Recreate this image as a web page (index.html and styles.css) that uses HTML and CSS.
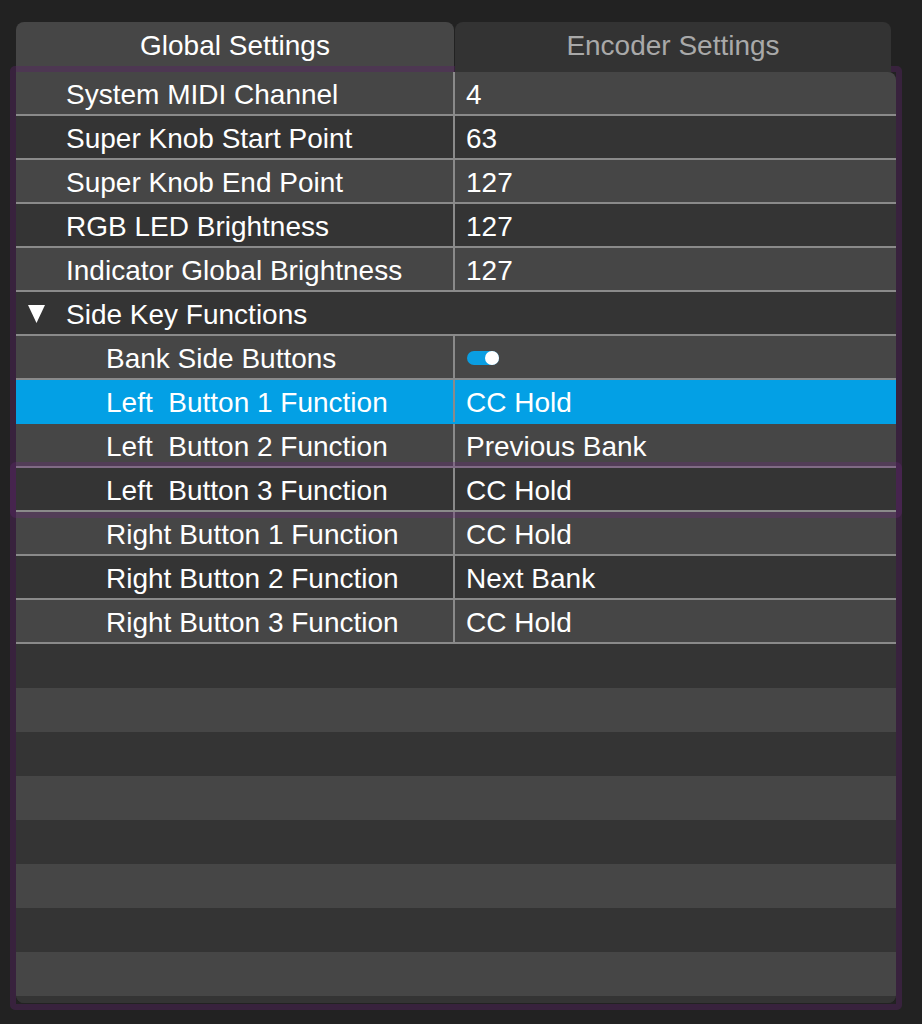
FILE: index.html
```html
<!DOCTYPE html>
<html>
<head>
<meta charset="utf-8">
<link rel="stylesheet" href="styles.css">
</head>
<body>
<div class="app">
  <div class="tabs">
    <div class="tab active">Global Settings</div>
    <div class="tab inactive">Encoder Settings</div>
  </div>
  <div class="panel">
    <div class="table">
      <div class="row"><div class="label">System MIDI Channel</div><div class="value">4</div></div>
      <div class="row"><div class="label">Super Knob Start Point</div><div class="value">63</div></div>
      <div class="row"><div class="label">Super Knob End Point</div><div class="value">127</div></div>
      <div class="row"><div class="label">RGB LED Brightness</div><div class="value">127</div></div>
      <div class="row"><div class="label">Indicator Global Brightness</div><div class="value">127</div></div>
      <div class="row group">
        <div class="label"><svg class="caret" width="17" height="18" viewBox="0 0 17 18"><polygon points="0,0 17,0 8.5,18" fill="#fff"/></svg>Side Key Functions</div>
      </div>
      <div class="row"><div class="label child">Bank Side Buttons</div><div class="value"><span class="toggle"><span class="knob"></span></span></div></div>
      <div class="row selected"><div class="label child">Left&nbsp; Button 1 Function</div><div class="value">CC Hold</div></div>
      <div class="row"><div class="label child">Left&nbsp; Button 2 Function</div><div class="value">Previous Bank</div></div>
      <div class="row"><div class="label child">Left&nbsp; Button 3 Function</div><div class="value">CC Hold</div></div>
      <div class="row"><div class="label child">Right Button 1 Function</div><div class="value">CC Hold</div></div>
      <div class="row"><div class="label child">Right Button 2 Function</div><div class="value">Next Bank</div></div>
      <div class="row"><div class="label child">Right Button 3 Function</div><div class="value">CC Hold</div></div>
      <div class="row empty"></div>
      <div class="row empty"></div>
      <div class="row empty"></div>
      <div class="row empty"></div>
      <div class="row empty"></div>
      <div class="row empty"></div>
      <div class="row empty"></div>
      <div class="row empty"></div>
      <div class="row empty"></div>
    </div>
    <div class="focus-ring"></div>
    <div class="frame"></div>
  </div>
</div>
</body>
</html>
```
FILE: styles.css
```css
html, body {
  margin: 0;
  padding: 0;
  background: #222222;
}
body {
  width: 922px;
  height: 1024px;
  overflow: hidden;
  font-family: "Liberation Sans", Arial, Helvetica, sans-serif;
  font-size: 28px;
  color: #ffffff;
}
.app {
  padding-top: 22px;
}
.tabs {
  display: flex;
  gap: 1px;
  padding-left: 16px;
}
.tab {
  height: 50px;
  box-sizing: border-box;
  padding-top: 2px;
  padding-bottom: 4px;
  line-height: 44px;
  text-align: center;
  border-radius: 8px 8px 0 0;
}
.tab.active {
  width: 438px;
  background: #464646;
  color: #ffffff;
}
.tab.inactive {
  width: 436px;
  background: #333333;
  color: #a9a9a9;
  position: relative;
  z-index: 3;
}
.panel {
  position: relative;
  margin-top: -6px;
  margin-left: 10px;
  width: 892px;
  height: 944px;
  box-sizing: border-box;
  padding: 6px 6px 7px 6px;
}
.table {
  width: 880px;
  height: 931px;
  overflow: hidden;
  border-radius: 0 8px 8px 8px;
  background: #343434;
}
.row {
  display: flex;
  height: 44px;
  box-sizing: border-box;
  border-bottom: 2px solid #8a8a8a;
  background: #464646;
}
.row:nth-child(even) {
  background: #343434;
}
.row.empty {
  border-bottom: none;
}
.row.selected {
  background: #03a0e5;
  border-bottom-color: #03a0e5;
}
.label {
  width: 439px;
  flex: none;
  box-sizing: border-box;
  padding-left: 50px;
  padding-top: 4px;
  line-height: 38px;
  border-right: 2px solid #8a8a8a;
  white-space: nowrap;
  display: flex;
  align-items: center;
}
.label.child {
  padding-left: 90px;
}
.group .label {
  border-right: none;
  padding-left: 12px;
}
.caret {
  margin-right: 21px;
  margin-top: -3px;
  flex: none;
}
.value {
  padding-left: 11px;
  padding-top: 4px;
  line-height: 38px;
  display: flex;
  align-items: center;
}
.toggle {
  display: block;
  position: relative;
  width: 32px;
  height: 14px;
  border-radius: 7px;
  background: #0a9ee2;
  margin-left: 1px;
  margin-top: -3px;
}
.knob {
  position: absolute;
  right: 0;
  top: 0;
  width: 14px;
  height: 14px;
  border-radius: 50%;
  background: #ffffff;
}
.frame {
  position: absolute;
  inset: 0;
  border: 6px solid rgba(88, 36, 100, 0.42);
  border-radius: 5px;
  pointer-events: none;
}
.focus-ring {
  position: absolute;
  left: 0;
  right: 0;
  top: 396px;
  height: 56px;
  box-sizing: border-box;
  border: 6px solid rgba(110, 45, 125, 0.32);
  border-radius: 6px;
  pointer-events: none;
}
```
